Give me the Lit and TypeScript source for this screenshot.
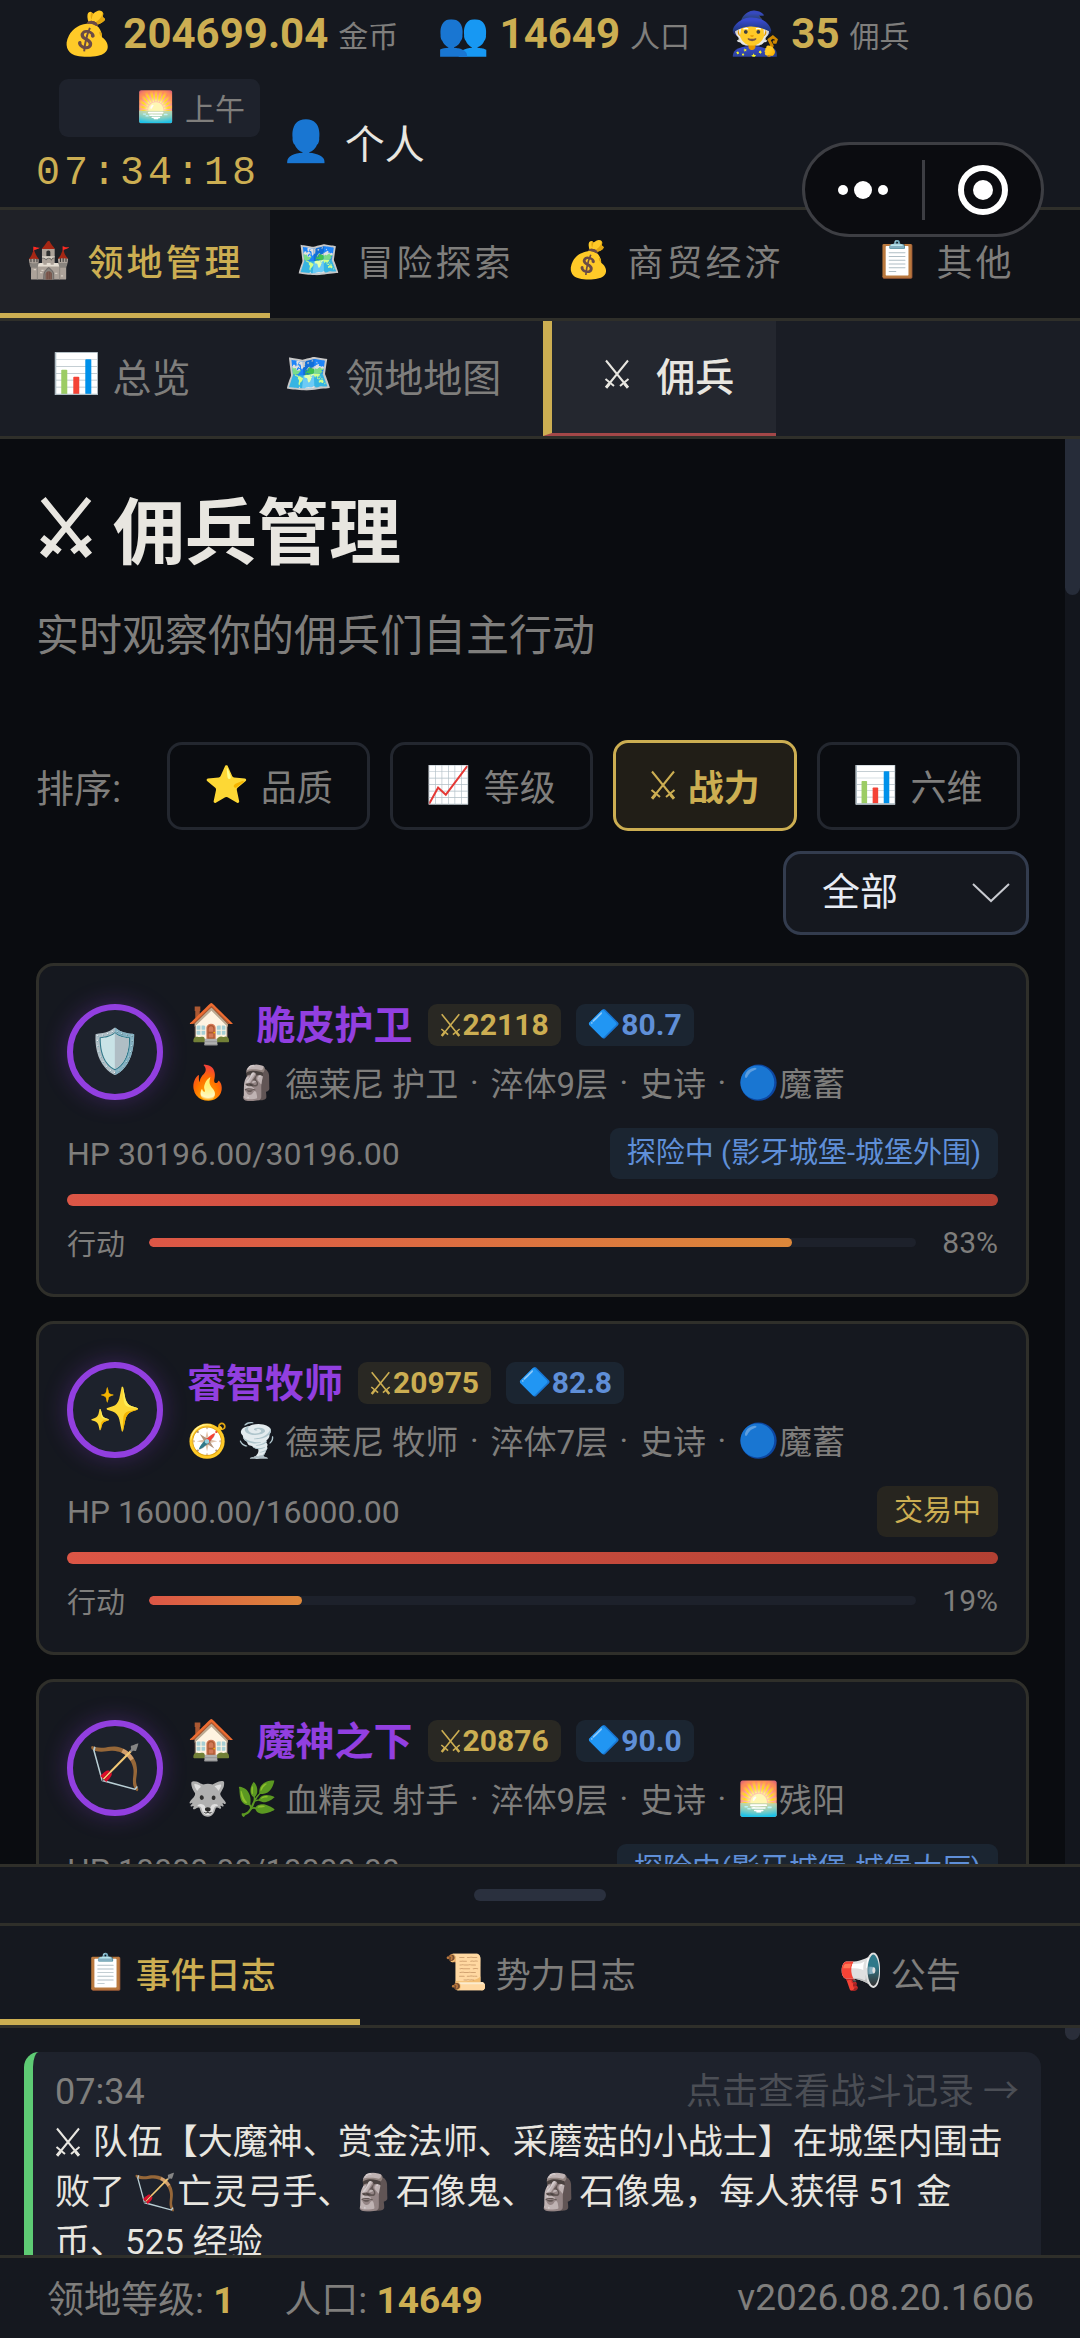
import { LitElement, html, css, svg, nothing } from "lit";
import { customElement, property, state } from "lit/decorators.js";
import { classMap } from "lit/directives/class-map.js";

const SWORDS = "swords";

/** Crossed swords drawn in the current text colour; every other icon is an emoji glyph. */
const swords = (bold = false) => html`
  <svg class="swords" viewBox="0 0 26 30" aria-hidden="true" fill="none" stroke="currentColor"
    stroke-width=${bold ? 3 : 2}>
    ${svg`
      <path d="M2 1.5 L23.5 28 M24 1.5 L2.5 28" />
      <path d="M1.5 20 L10 27 M24.5 20 L16 27" />
      <path d="M5.5 24.5 L2 28.7 M20.5 24.5 L24 28.7" stroke-width=${bold ? 4 : 3} />
    `}
  </svg>
`;

const icon = (name: string, bold = false) =>
  name === SWORDS ? swords(bold) : html`<span class="emoji" aria-hidden="true">${name}</span>`;

const shared = css`
  * { box-sizing: border-box; }
  button, select {
    font: inherit;
    color: inherit;
    background: none;
    border: 0;
    border-radius: 0;
    margin: 0;
    padding: 0;
    cursor: pointer;
  }
  .emoji { font-family: "Noto Color Emoji", "Apple Color Emoji", sans-serif; font-weight: 400; line-height: 1; }
  .swords { width: 26px; height: 30px; flex: none; }
`;

interface Mercenary {
  avatar: string;
  home: boolean;
  name: string;
  power: string;
  stats: string;
  traits: string[];
  summary: string[];
  elementIcon: string;
  element: string;
  hp: string;
  status: string;
  tone: "blue" | "gold";
  action: number;
}

@customElement("mercenary-card")
export class MercenaryCard extends LitElement {
  @property({ attribute: false }) data!: Mercenary;

  static styles = [
    shared,
    css`
      :host {
        display: block;
        flex: none;
        padding: 28px;
        border: 3px solid #2f2f2a;
        border-radius: 18px;
        background: #15181f;
        color: #7f7e7c;
      }
      .top { display: flex; align-items: center; gap: 24px; }
      .avatar {
        flex: none;
        display: grid;
        place-items: center;
        width: 96px;
        height: 96px;
        border: 6px solid #923fe0;
        border-radius: 50%;
        background: #1d222c;
        box-shadow: 0 0 24px rgba(146, 63, 224, 0.3);
        font-size: 43px;
        line-height: 1;
      }
      .title { display: flex; align-items: center; gap: 15px; height: 61px; }
      .home { font-size: 39px; margin-right: 6px; }
      .name { margin: 0; padding-bottom: 5px; font-size: 39px; font-weight: 700; color: #923fe0; }
      .badge {
        display: flex;
        align-items: center;
        height: 42px;
        padding: 0 12px;
        border-radius: 9px;
        font-size: 30px;
        font-weight: 700;
      }
      .badge .swords { width: 21px; height: 24px; margin-right: 2px; }
      .badge .emoji { font-size: 27px; }
      .gold { color: #ccae52; background: #292823; }
      .blue { color: #5f8fd8; background: #1b2531; }
      .meta { display: flex; align-items: center; gap: 8px; height: 54px; font-size: 33px; white-space: nowrap; }
      .summary { display: flex; align-items: center; }
      .dot { width: 32px; text-align: center; }
      .vitals { display: flex; align-items: center; justify-content: space-between; margin-top: 19px; font-size: 32px; }
      .status { height: 51px; line-height: 51px; padding: 0 17px; border-radius: 9px; font-size: 29px; white-space: nowrap; }
      .status.gold { background: #27251f; }
      .hp { height: 12px; margin-top: 15px; border-radius: 6px; background: linear-gradient(90deg, #dc5646, #b24033); }
      .action { display: flex; align-items: center; gap: 24px; height: 48px; margin-top: 12px; font-size: 29px; }
      .track { flex: 1; height: 9px; border-radius: 5px; background: #1d212b; overflow: hidden; }
      .fill { height: 100%; border-radius: 5px; background: linear-gradient(90deg, #dc5646, #dc873a); }
      .percent { width: 58px; text-align: right; font-size: 30px; }
    `,
  ];

  render() {
    const m = this.data;
    return html`
      <article>
        <div class="top">
          <div class="avatar">${icon(m.avatar)}</div>
          <div>
            <div class="title">
              ${m.home ? html`<span class="emoji home">🏠</span>` : nothing}
              <h2 class="name">${m.name}</h2>
              <span class="badge gold">${swords()}${m.power}</span>
              <span class="badge blue">${icon("🔷")}${m.stats}</span>
            </div>
            <div class="meta">
              ${m.traits.map((t) => icon(t))}
              <div class="summary">
                ${m.summary.map((part) => html`<span>${part}</span><span class="dot">·</span>`)}
                ${icon(m.elementIcon)}<span>${m.element}</span>
              </div>
            </div>
          </div>
        </div>
        <div class="vitals">
          <span>HP ${m.hp}/${m.hp}</span>
          <span class="status ${m.tone}">${m.status}</span>
        </div>
        <div class="hp"></div>
        <div class="action">
          <span>行动</span>
          <div class="track"><div class="fill" style="width:${m.action}%"></div></div>
          <span class="percent">${Math.floor(m.action)}%</span>
        </div>
      </article>
    `;
  }
}

@customElement("app-root")
export class AppRoot extends LitElement {
  @state() private section = 0;
  @state() private view = 2;
  @state() private sort = 2;
  @state() private log = 0;

  private resources = [
    { icon: "💰", value: "204699.04", label: "金币" },
    { icon: "👥", value: "14649", label: "人口" },
    { icon: "🧙", value: "35", label: "佣兵" },
  ];
  private sections = [
    ["🏰", "领地管理"],
    ["🗺️", "冒险探索"],
    ["💰", "商贸经济"],
    ["📋", "其他"],
  ];
  private views = [
    ["📊", "总览"],
    ["🗺️", "领地地图"],
    [SWORDS, "佣兵"],
  ];
  private sorts = [
    ["⭐", "品质"],
    ["📈", "等级"],
    [SWORDS, "战力"],
    ["📊", "六维"],
  ];
  private logs = [
    ["📋", "事件日志"],
    ["📜", "势力日志"],
    ["📢", "公告"],
  ];
  private mercenaries: Mercenary[] = [
    {
      avatar: "🛡️", home: true, name: "脆皮护卫", power: "22118", stats: "80.7",
      traits: ["🔥", "🗿"], summary: ["德莱尼 护卫", "淬体9层", "史诗"], elementIcon: "🔵", element: "魔蓄",
      hp: "30196.00", status: "探险中 (影牙城堡-城堡外围)", tone: "blue", action: 83.8,
    },
    {
      avatar: "✨", home: false, name: "睿智牧师", power: "20975", stats: "82.8",
      traits: ["🧭", "🌪️"], summary: ["德莱尼 牧师", "淬体7层", "史诗"], elementIcon: "🔵", element: "魔蓄",
      hp: "16000.00", status: "交易中", tone: "gold", action: 19.9,
    },
    {
      avatar: "🏹", home: true, name: "魔神之下", power: "20876", stats: "90.0",
      traits: ["🐺", "🌿"], summary: ["血精灵 射手", "淬体9层", "史诗"], elementIcon: "🌅", element: "残阳",
      hp: "10000.00", status: "探险中(影牙城堡-城堡大厅)", tone: "blue", action: 50,
    },
  ];

  static styles = [
    shared,
    css`
      :host {
        display: flex;
        flex-direction: column;
        position: relative;
        height: 100vh;
        overflow: hidden;
        background: #15181f;
        color: #7f7e7c;
        font-family: Roboto, "Noto Sans CJK SC", sans-serif;
        font-size: 36px;
      }
      .header { flex: none; border-bottom: 3px solid #2f2f2a; padding: 0 36px 14px; background: #15181f; }
      .resources { display: flex; gap: 39px; height: 67px; padding-left: 25px; }
      .resource { display: flex; align-items: center; gap: 10px; font-size: 30px; white-space: nowrap; }
      .resource .emoji { font-size: 42px; }
      .resource strong { font-size: 42px; font-weight: 700; color: #ccae52; }
      .player { display: flex; align-items: center; gap: 21px; margin-top: 12px; }
      .time { display: flex; flex-direction: column; align-items: flex-end; }
      .period {
        display: flex;
        align-items: center;
        justify-content: flex-end;
        gap: 10px;
        width: 201px;
        height: 58px;
        padding: 0 15px 2px;
        border-radius: 9px;
        background: #1e222c;
        font-size: 30px;
      }
      .clock {
        height: 56px;
        padding-top: 12px;
        line-height: 50px;
        letter-spacing: 4px;
        font-family: "Liberation Mono", monospace;
        font-size: 40px;
        color: #ccae52;
      }
      .profile { display: flex; align-items: center; gap: 14px; padding-top: 12px; font-size: 40px; color: #e8e6e0; }

      .capsule {
        position: absolute;
        top: 142px;
        right: 36px;
        display: flex;
        align-items: center;
        width: 242px;
        height: 95px;
        border: 3px solid #3d3e43;
        border-radius: 48px;
        background: #0b0c10;
      }
      .capsule button { flex: 1; height: 100%; display: grid; place-items: center; }
      .split { width: 3px; height: 60px; background: #3d3e43; }

      .sections { flex: none; display: grid; grid-template-columns: repeat(4, 1fr); border-bottom: 3px solid #2f2f2a; background: #101217; }
      .section {
        display: flex;
        align-items: center;
        justify-content: center;
        gap: 16px;
        height: 108px;
        padding-bottom: 3px;
        border-bottom: 5px solid transparent;
        letter-spacing: 3px;
        white-space: nowrap;
      }
      .section.active { background: #1f2127; border-color: #ccae52; color: #ccae52; font-weight: 500; }
      .section .emoji { letter-spacing: 0; }

      .views { flex: none; display: flex; border-bottom: 3px solid #2f2f2a; background: #1a1d25; }
      .view { display: flex; align-items: center; gap: 12px; height: 115px; padding: 0 42px 8px 52px; font-size: 39px; white-space: nowrap; }
      .view.active {
        gap: 26px;
        padding-bottom: 6px;
        border-left: 9px solid #ccae52;
        border-bottom: 3px solid #a34748;
        background: #24272f;
        color: #e8e6e0;
        font-weight: 500;
      }

      .scroller { display: flex; min-height: 0; overflow: hidden; }
      .main { flex: 1; background: #0a0c10; }
      .content { flex: 1; min-width: 0; padding: 32px 36px 36px; }
      .bar { flex: none; width: 15px; background: #13161d; }
      .thumb { height: 156px; border-radius: 0 0 8px 8px; background: #262c39; }
      .heading { display: flex; align-items: center; gap: 20px; margin: 0; height: 111px; padding-left: 3px; font-size: 72px; font-weight: 700; color: #e8e6e0; }
      .heading .swords { width: 54px; height: 64px; }
      .subtitle { margin: 20px 0 69px; font-size: 43px; line-height: 69px; }

      .filters { display: flex; flex-wrap: wrap; align-items: center; gap: 20px; margin-bottom: 28px; }
      .filters > span { width: 111px; font-size: 38px; white-space: nowrap; }
      .sort {
        display: flex;
        align-items: center;
        gap: 12px;
        height: 88px;
        padding: 0 34px 2px;
        border: 3px solid #23272f;
        border-radius: 15px;
        white-space: nowrap;
      }
      .sort.active { height: 91px; border-color: #ccae52; background: #211e17; color: #ccae52; font-weight: 700; }
      .picker { display: grid; align-items: center; width: 246px; margin-left: auto; color: #e8ecf4; }
      .picker select {
        grid-area: 1 / 1;
        height: 84px;
        padding: 0 36px 2px;
        border: 3px solid #333c4e;
        border-radius: 18px;
        background: #15181f;
        appearance: none;
        font-size: 38px;
      }
      .picker svg { grid-area: 1 / 1; justify-self: end; width: 40px; height: 22px; margin-right: 18px; pointer-events: none; }
      .cards { display: flex; flex-direction: column; gap: 24px; }

      .handle { flex: none; display: grid; place-items: center; height: 62px; border: solid #2f2f2a; border-width: 3px 0; }
      .grip { width: 132px; height: 12px; border-radius: 6px; background: #2a303e; }
      .logs { flex: none; display: grid; grid-template-columns: repeat(3, 1fr); border-bottom: 3px solid #2f2f2a; }
      .log { display: flex; align-items: center; justify-content: center; gap: 8px; height: 99px; border-bottom: 6px solid transparent; font-size: 35px; }
      .log.active { border-color: #ccae52; color: #ccae52; font-weight: 500; }
      .feed { flex: none; height: 227px; }
      .entries { flex: 1; padding: 24px; }
      .entry { padding: 14px 22px; border-left: 9px solid #5ecb74; border-radius: 15px; background: #1e222c; }
      .entry-head { display: flex; justify-content: space-between; line-height: 52px; white-space: nowrap; }
      .entry-head a { color: #4b4e55; text-decoration: none; }
      .entry p { margin: 0; font-size: 35px; line-height: 50px; color: #e8e6e0; }
      .entry .swords { vertical-align: -3px; margin-right: 3px; }
      .feed .bar { background: none; }
      .feed .thumb { height: 12px; background: #2a2e3a; }

      .footer {
        flex: none;
        display: flex;
        align-items: center;
        gap: 50px;
        height: 83px;
        padding: 0 46px 2px 47px;
        border-top: 3px solid #2f2f2a;
        font-size: 37px;
        white-space: nowrap;
      }
      .footer strong { font-weight: 700; color: #ccae52; }
      .version { margin-left: auto; }
    `,
  ];

  private tabs(items: string[][], name: string, current: number, pick: (i: number) => void) {
    return items.map(
      ([glyph, label], i) => html`
        <button
          class=${classMap({ [name]: true, active: i === current })}
          aria-pressed=${i === current ? "true" : "false"}
          @click=${() => pick(i)}
        >
          ${icon(glyph)}<span>${label}</span>
        </button>
      `,
    );
  }

  render() {
    return html`
      <header class="header">
        <div class="resources">
          ${this.resources.map(
            (r) => html`<div class="resource">${icon(r.icon)}<strong>${r.value}</strong><span>${r.label}</span></div>`,
          )}
        </div>
        <div class="player">
          <div class="time">
            <div class="period">${icon("🌅")}<span>上午</span></div>
            <time class="clock">07:34:18</time>
          </div>
          <button class="profile">${icon("👤")}<span>个人</span></button>
        </div>
      </header>

      <div class="capsule">
        <button aria-label="更多">
          <svg width="54" height="24" viewBox="0 0 54 24" fill="#fff">
            <circle cx="7" cy="12" r="5" /><circle cx="27" cy="12" r="9" /><circle cx="47" cy="12" r="5" />
          </svg>
        </button>
        <span class="split"></span>
        <button aria-label="关闭">
          <svg width="52" height="52" viewBox="0 0 52 52">
            <circle cx="26" cy="26" r="22" fill="none" stroke="#fff" stroke-width="6" />
            <circle cx="26" cy="26" r="10" fill="#fff" />
          </svg>
        </button>
      </div>

      <nav class="sections">${this.tabs(this.sections, "section", this.section, (i) => (this.section = i))}</nav>
      <nav class="views">${this.tabs(this.views, "view", this.view, (i) => (this.view = i))}</nav>

      <div class="scroller main">
        <main class="content">
          <h1 class="heading">${swords(true)}<span>佣兵管理</span></h1>
          <p class="subtitle">实时观察你的佣兵们自主行动</p>
          <div class="filters">
            <span>排序:</span>
            ${this.tabs(this.sorts, "sort", this.sort, (i) => (this.sort = i))}
            <label class="picker">
              <select aria-label="筛选"><option>全部</option></select>
              <svg viewBox="0 0 40 22" fill="none" stroke="#c8cad0" stroke-width="2"><path d="M2 2 L20 19 L38 2" /></svg>
            </label>
          </div>
          <div class="cards">
            ${this.mercenaries.map((m) => html`<mercenary-card .data=${m}></mercenary-card>`)}
          </div>
        </main>
        <div class="bar"><div class="thumb"></div></div>
      </div>

      <div class="handle"><div class="grip"></div></div>
      <nav class="logs">${this.tabs(this.logs, "log", this.log, (i) => (this.log = i))}</nav>
      <section class="scroller feed">
        <div class="entries">
          <article class="entry">
            <div class="entry-head"><time>07:34</time><a href="#battle">点击查看战斗记录 →</a></div>
            <p>${swords()} 队伍【大魔神、赏金法师、采蘑菇的小战士】在城堡内围击败了 ${icon("🏹")}亡灵弓手、${icon("🗿")}石像鬼、${icon("🗿")}石像鬼，每人获得 51 金币、525 经验</p>
          </article>
        </div>
        <div class="bar"><div class="thumb"></div></div>
      </section>

      <footer class="footer">
        <span>领地等级: <strong>1</strong></span>
        <span>人口: <strong>14649</strong></span>
        <span class="version">v2026.08.20.1606</span>
      </footer>
    `;
  }
}
